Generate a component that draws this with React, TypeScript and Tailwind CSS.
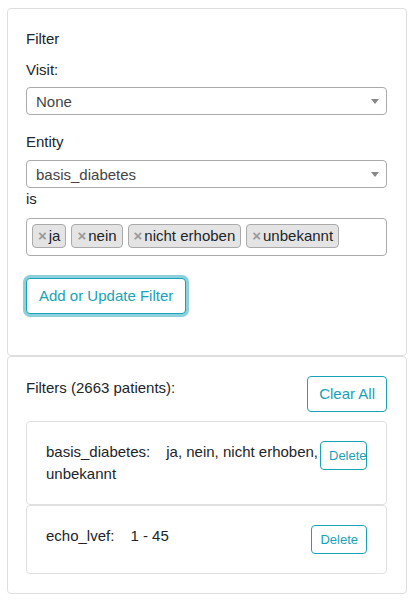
import React from "react";

const TAGS = ["ja", "nein", "nicht erhoben", "unbekannt"];

function FakeSelect({ value }: { value: string }) {
  return (
    <div className="flex h-[28px] items-center justify-between rounded-[4px] border border-[#aaaaaa] bg-white pl-[9px] pr-[7px] text-[#444444]">
      <span className="pt-[1px] leading-[26px]">{value}</span>
      <span className="h-0 w-0 border-x-[4px] border-t-[5px] border-x-transparent border-t-[#888888]" />
    </div>
  );
}

function FilterCard({
  label,
  value,
  buttonClass,
}: {
  label: string;
  value: string;
  buttonClass?: string;
}) {
  return (
    <div className="flex items-start rounded-[4px] border border-[#e0e0e0] px-[19px] py-[19px]">
      <div className="min-w-0 flex-1 leading-[22px]">
        <span className="mr-4">{label}</span>
        {value}
      </div>
      <button
        type="button"
        className={`h-[29px] shrink-0 whitespace-nowrap rounded-[4px] border border-[#17a2b8] bg-white px-2 text-left text-[13px] leading-[19px] text-[#17a2b8] ${buttonClass ?? ""}`}
      >
        Delete
      </button>
    </div>
  );
}

export default function App() {
  return (
    <div
      className="min-h-screen bg-white pl-[7px] pt-[8px] text-[15px] text-[#212529]"
      style={{ fontFamily: '"Liberation Sans", Arial, sans-serif' }}
    >
      <div className="w-[400px]">
        {/* filter form */}
        <div className="rounded-[4px] border border-[#dedede] pb-[41px] pl-[18px] pr-[19px] pt-[19px]">
          <div className="leading-[22px]">Filter</div>
          <div className="mt-[9px] leading-[22px]">Visit:</div>
          <div className="mt-[6px]">
            <FakeSelect value="None" />
          </div>
          <div className="mt-[16px] leading-[22px]">Entity</div>
          <div className="mt-[7px]">
            <FakeSelect value="basis_diabetes" />
          </div>
          <div className="leading-[22px]">is</div>
          <div className="mt-[8px] flex h-[38px] items-start gap-[5px] rounded-[4px] border border-[#aaaaaa] pl-[5px] pt-[5px]">
            {TAGS.map((t) => (
              <span
                key={t}
                className="flex h-[24px] items-center rounded-[4px] border border-[#aaaaaa] bg-[#e4e4e4] px-[5px] leading-[22px]"
              >
                <span className="mr-[2px] font-bold text-[#999999]">×</span>
                {t}
              </span>
            ))}
          </div>
          <button
            type="button"
            className="mt-[22px] h-[36px] rounded-[4px] border border-[#17a2b8] bg-white px-3 leading-[22px] text-[#17a2b8] shadow-[0_0_0_3px_rgba(23,162,184,0.5)]"
          >
            Add or Update Filter
          </button>
        </div>

        {/* active filters */}
        <div className="rounded-[4px] border border-[#dedede] pb-[19px] pl-[18px] pr-[19px] pt-[19px]">
          <div className="flex items-start justify-between">
            <div className="pt-[1px] leading-[22px]">Filters (2663 patients):</div>
            <button
              type="button"
              className="h-[36px] rounded-[4px] border border-[#17a2b8] bg-white px-[11px] leading-[22px] text-[#17a2b8]"
            >
              Clear All
            </button>
          </div>
          <div className="mt-[9px]">
            <FilterCard
              label="basis_diabetes:"
              value="ja, nein, nicht erhoben, unbekannt"
              buttonClass="w-[47px]"
            />
            <FilterCard label="echo_lvef:" value="1 - 45" />
          </div>
        </div>
      </div>
    </div>
  );
}
